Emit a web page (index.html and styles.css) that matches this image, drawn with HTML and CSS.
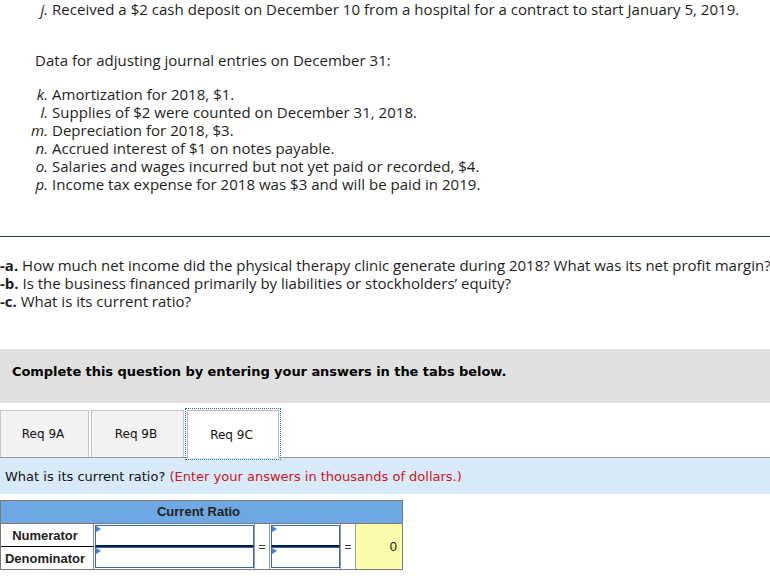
FILE: index.html
```html
<!DOCTYPE html>
<html>
<head>
<meta charset="utf-8">
<link rel="stylesheet" href="styles.css">
</head>
<body>
<div class="problem">
  <div class="item first"><span class="lbl">j.</span><span class="txt">Received a $2 cash deposit on December 10 from a hospital for a contract to start January 5, 2019.</span></div>
  <p class="data">Data for adjusting journal entries on December 31:</p>
  <div class="list">
    <div class="item"><span class="lbl">k.</span><span class="txt">Amortization for 2018, $1.</span></div>
    <div class="item"><span class="lbl">l.</span><span class="txt">Supplies of $2 were counted on December 31, 2018.</span></div>
    <div class="item"><span class="lbl">m.</span><span class="txt">Depreciation for 2018, $3.</span></div>
    <div class="item"><span class="lbl">n.</span><span class="txt">Accrued interest of $1 on notes payable.</span></div>
    <div class="item"><span class="lbl">o.</span><span class="txt">Salaries and wages incurred but not yet paid or recorded, $4.</span></div>
    <div class="item"><span class="lbl">p.</span><span class="txt">Income tax expense for 2018 was $3 and will be paid in 2019.</span></div>
  </div>
</div>
<hr class="rule">
<div class="questions">
  <div><b>-a.</b> How much net income did the physical therapy clinic generate during 2018? What was its net profit margin?</div>
  <div><b>-b.</b> Is the business financed primarily by liabilities or stockholders’ equity?</div>
  <div><b>-c.</b> What is its current ratio?</div>
</div>
<div class="instructions">Complete this question by entering your answers in the tabs below.</div>
<div class="tabs">
  <div class="tab">Req 9A</div>
  <div class="tab tab-b">Req 9B</div>
  <div class="tab active">Req 9C</div>
</div>
<div class="prompt">What is its current ratio? <span class="red">(Enter your answers in thousands of dollars.)</span></div>
<div class="ratio">
  <div class="ratio-head">Current Ratio</div>
  <div class="ratio-body">
    <div class="lab num">Numerator</div>
    <div class="cell c1 r1"><div class="box top"></div></div>
    <div class="eq e1">=</div>
    <div class="cell c2 r1"><div class="box top"></div></div>
    <div class="eq e2">=</div>
    <div class="res">0</div>
    <div class="lab den">Denominator</div>
    <div class="cell c1 r2"><div class="box"></div></div>
    <div class="cell c2 r2"><div class="box"></div></div>
  </div>
</div>
</body>
</html>
```

FILE: styles.css
```css
html, body {
  margin: 0;
  padding: 0;
  background: #ffffff;
}
body {
  width: 770px;
  overflow: hidden;
  font-family: "Open Sans", Lato, sans-serif;
  color: #1e1e1e;
}
.problem {
  font-size: 15px;
  line-height: 18px;
  letter-spacing: 0.03px;
}
.item {
  display: flex;
  white-space: nowrap;
}
.item.first {
  padding-top: 0;
}
.lbl {
  width: 52px;
  flex: none;
  box-sizing: border-box;
  padding-right: 4px;
  text-align: right;
  font-style: italic;
}
.data {
  margin: 33px 0 0 35px;
}
.list {
  margin-top: 16px;
}
.rule {
  margin: 43px 0 0;
  border: 0;
  height: 0;
  border-top: 1px solid #22395a;
}
.questions {
  margin-top: 19px;
  font-size: 15px;
  line-height: 18px;
  white-space: nowrap;
}
.instructions {
  margin-top: 39px;
  height: 54px;
  box-sizing: border-box;
  padding: 15px 12px 0;
  background: #e0e0e0;
  font-family: "DejaVu Sans", Verdana, sans-serif;
  font-weight: bold;
  font-size: 13px;
  letter-spacing: -0.06px;
  line-height: 16px;
  color: #000;
}
.tabs {
  margin-top: 7px;
  height: 47px;
  display: flex;
  align-items: flex-end;
  border-bottom: 1px solid #9a9a9a;
}
.tab {
  height: 47px;
  box-sizing: border-box;
  border: 1px solid #c6c6c6;
  border-bottom: 0;
  background: #f2f2f2;
  width: 89px;
  display: flex;
  align-items: center;
  justify-content: center;
  padding-right: 3px;
  font-family: "DejaVu Sans", Verdana, sans-serif;
  font-size: 12px;
  color: #111;
}
.tab-b {
  margin-left: 2px;
  width: 93px;
}
.tab.active {
  margin-left: 3px;
  width: 92px;
  background: #fff;
  border-color: #b8b8b8;
  outline: 1px dotted #2d6cc0;
  outline-offset: 1px;
  position: relative;
  z-index: 1;
  margin-bottom: -1px;
  height: 48px;
}
.prompt {
  height: 36px;
  display: flex;
  align-items: center;
  padding-left: 5px;
  background: #d8eaf9;
  font-family: "DejaVu Sans", Verdana, sans-serif;
  font-size: 13px;
  color: #111;
  white-space: pre;
}
.red {
  color: #cc1424;
}
.ratio {
  margin-top: 6px;
  width: 403px;
  box-sizing: border-box;
  border: 1px solid #7a7a7a;
  font-family: "Liberation Sans", Arial, sans-serif;
  font-weight: bold;
  font-size: 13px;
  color: #222;
}
.ratio-head {
  height: 22px;
  line-height: 22px;
  text-align: center;
  padding-right: 6px;
  background: #6ea7e3;
  border-bottom: 1px solid #7a7a7a;
}
.ratio-body {
  display: grid;
  grid-template-columns: 93px 160px 16px 70px 16px 46px;
  grid-template-rows: 23px 22px;
}
.lab {
  display: flex;
  align-items: center;
  justify-content: center;
  padding-right: 4px;
  border-right: 1px solid #8a8a8a;
}
.lab.num {
  grid-column: 1;
  grid-row: 1;
  border-bottom: 1px solid #000;
}
.lab.den {
  grid-column: 1;
  grid-row: 2;
}
.cell {
  display: flex;
  padding-left: 1px;
}
.c1 { grid-column: 2; }
.c2 { grid-column: 4; }
.r1 { grid-row: 1; padding-top: 1px; }
.r2 { grid-row: 2; padding-bottom: 1px; }
.box {
  flex: 1;
  position: relative;
  border: 1px solid #3768ae;
  background: #fff;
}
.box.top {
  border-bottom: 2px solid #0c1d3c;
}
.box::before {
  content: "";
  position: absolute;
  left: 0;
  top: 0;
  width: 0;
  height: 0;
  border-left: 5px solid #3f7fd6;
  border-top: 3px solid transparent;
  border-bottom: 3px solid transparent;
}
.eq {
  grid-row: 1 / span 2;
  display: flex;
  align-items: center;
  justify-content: center;
  border-left: 1px solid #9a9a9a;
  border-right: 1px solid #9a9a9a;
  font-weight: normal;
  font-size: 12px;
  color: #333;
  box-sizing: border-box;
}
.e1 { grid-column: 3; }
.e2 { grid-column: 5; }
.res {
  grid-column: 6;
  grid-row: 1 / span 2;
  display: flex;
  align-items: center;
  justify-content: flex-end;
  padding-right: 5px;
  background: #fbfba9;
  font-weight: normal;
  font-size: 13px;
  color: #111;
}
```
